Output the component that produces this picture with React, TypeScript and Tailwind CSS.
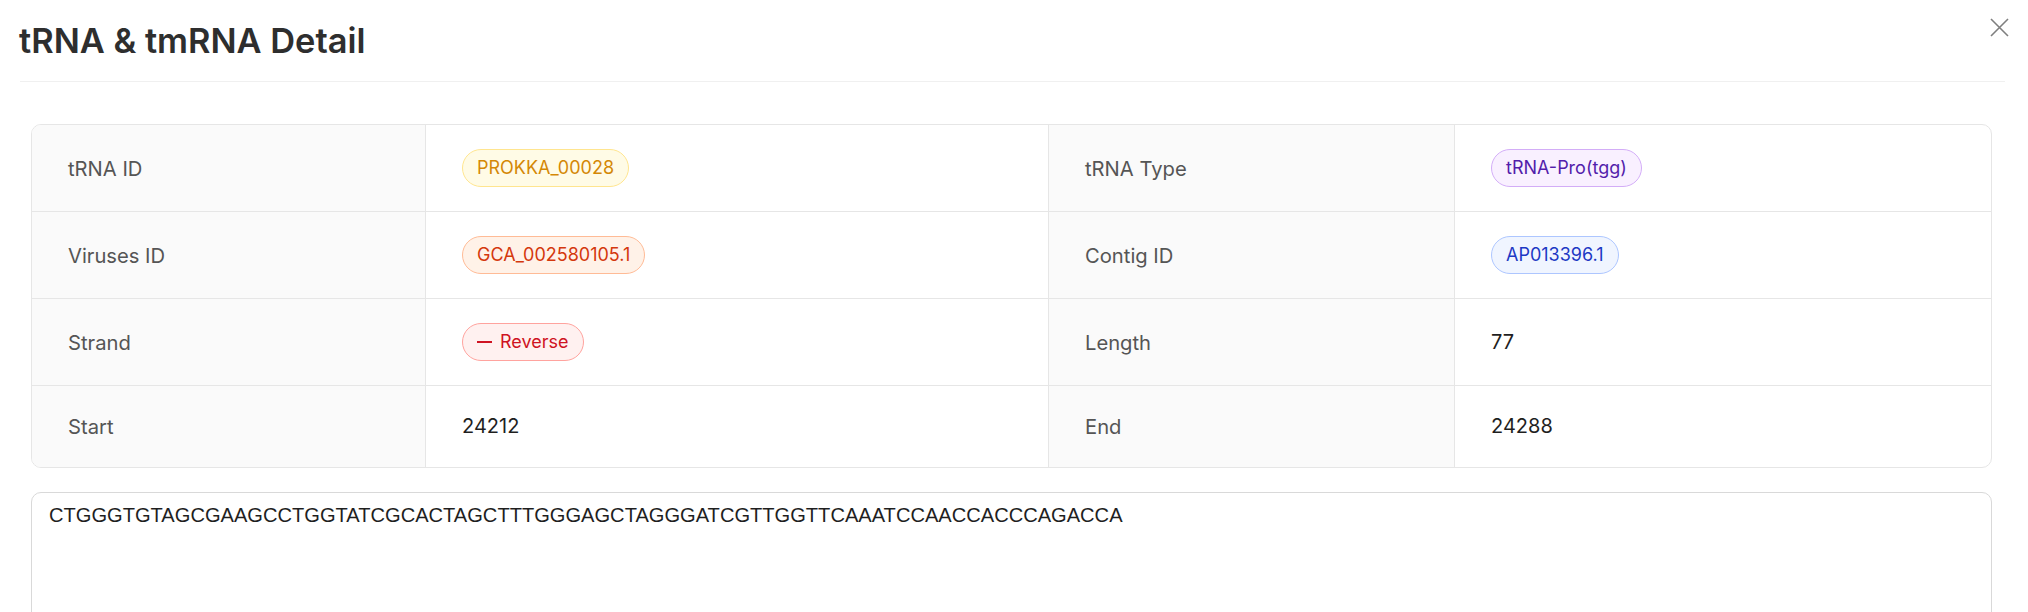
import type { ReactNode } from 'react'

type Tone = 'gold' | 'volcano' | 'purple' | 'geekblue' | 'red'

const toneClass: Record<Tone, string> = {
  gold: 'bg-[#fffbe6] border-[#ffe58f] text-[#d48806]',
  volcano: 'bg-[#fff2e8] border-[#ffbb96] text-[#d4380d]',
  purple: 'bg-[#f9f0ff] border-[#d3adf7] text-[#531dab]',
  geekblue: 'bg-[#f0f5ff] border-[#adc6ff] text-[#1d39c4]',
  red: 'bg-[#fff1f0] border-[#ffa39e] text-[#cf1322]',
}

function Tag({ tone, children }: { tone: Tone; children: ReactNode }) {
  return (
    <span
      className={`inline-flex h-[38px] items-center gap-[8px] rounded-full border px-[14px] text-[18px] leading-none ${toneClass[tone]}`}
    >
      {children}
    </span>
  )
}

function Label({ children, last }: { children: ReactNode; last?: boolean }) {
  return (
    <div
      className={`flex items-center border-r border-[#e6e6e6] bg-[#fafafa] px-[36px] py-[24px] text-[20.2px] leading-[33px] text-[#555555] ${
        last ? '' : 'border-b'
      }`}
    >
      {children}
    </div>
  )
}

function Value({ children, last, edge }: { children: ReactNode; last?: boolean; edge?: boolean }) {
  return (
    <div
      className={`flex items-center border-[#e6e6e6] px-[36px] py-[24px] text-[20px] leading-[33px] text-[#1f1f1f] ${
        last ? '' : 'border-b'
      } ${edge ? '' : 'border-r'}`}
    >
      {children}
    </div>
  )
}

const sequence =
  'CTGGGTGTAGCGAAGCCTGGTATCGCACTAGCTTTGGGAGCTAGGGATCGTTGGTTCAAATCCAACCACCCAGACCA'

export default function App() {
  return (
    <div className="relative h-[612px] overflow-hidden bg-white font-['Inter',sans-serif]">
      {/* header */}
      <div className="ml-[20px] mr-[23px] border-b border-[#f0f0f0] pb-[20px] pt-[20px]">
        <h1 className="ml-[-1px] text-[34.4px] font-semibold leading-[41px] text-[#2e2e2e]">tRNA &amp; tmRNA Detail</h1>
      </div>
      <button className="absolute right-[19px] top-[17px] flex h-[20px] w-[20px] items-center justify-center text-[#7f7f7f]">
        <svg width="19" height="19" viewBox="0 0 19 19" fill="none" stroke="currentColor" strokeWidth="1.6">
          <path d="M1 1L18 18M18 1L1 18" />
        </svg>
      </button>

      {/* details */}
      <div className="ml-[31px] mr-[36px] mt-[42px]">
        <div className="grid grid-cols-[394px_623px_406px_1fr] overflow-hidden rounded-[10px] border border-[#e6e6e6]">
          <Label>tRNA ID</Label>
          <Value>
            <Tag tone="gold">PROKKA_00028</Tag>
          </Value>
          <Label>tRNA Type</Label>
          <Value edge>
            <Tag tone="purple">tRNA-Pro(tgg)</Tag>
          </Value>

          <Label>Viruses ID</Label>
          <Value>
            <Tag tone="volcano">GCA_002580105.1</Tag>
          </Value>
          <Label>Contig ID</Label>
          <Value edge>
            <Tag tone="geekblue">AP013396.1</Tag>
          </Value>

          <Label>Strand</Label>
          <Value>
            <Tag tone="red">
              <svg width="15" height="2" viewBox="0 0 15 2">
                <rect width="15" height="2" fill="currentColor" />
              </svg>
              Reverse
            </Tag>
          </Value>
          <Label>Length</Label>
          <Value edge>77</Value>

          <Label last>Start</Label>
          <Value last>24212</Value>
          <Label last>End</Label>
          <Value last edge>
            24288
          </Value>
        </div>

        <div className="mt-[24px] h-[160px] rounded-[10px] border border-[#d9d9d9] px-[17px] pt-[7px] font-['Liberation_Sans',Arial,sans-serif] text-[20.1px] leading-[31px] text-[#1f1f1f]">
          {sequence}
        </div>
      </div>
    </div>
  )
}
